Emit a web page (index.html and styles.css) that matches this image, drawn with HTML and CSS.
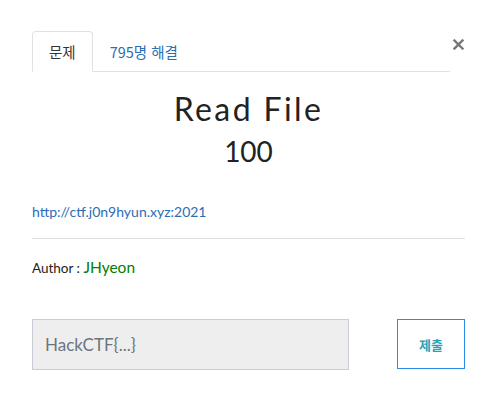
FILE: index.html
```html
<!DOCTYPE html>
<html lang="ko">
<head>
<meta charset="utf-8">
<link rel="stylesheet" href="styles.css">
</head>
<body>
<div class="modal">
  <div class="modal-head">
    <ul class="tabs">
      <li class="tab active">문제</li>
      <li class="tab">795명 해결</li>
    </ul>
    <button class="close" aria-label="닫기">
      <svg width="11" height="11" viewBox="0 0 11 11"><path d="M1.5 1.5 L9.5 9.5 M9.5 1.5 L1.5 9.5" stroke="#777" stroke-width="2.4" stroke-linecap="square"/></svg>
    </button>
  </div>
  <h1 class="title">Read File</h1>
  <div class="points">100</div>
  <p class="desc"><a href="#" class="link">http://ctf.j0n9hyun.xyz:2021</a></p>
  <hr class="sep">
  <p class="author">Author : <span class="author-name">JHyeon</span></p>
  <form class="submit-row">
    <input class="flag-input" type="text" placeholder="HackCTF{...}">
    <button class="submit-btn" type="button">제출</button>
  </form>
</div>
</body>
</html>
```
FILE: styles.css
```css
html, body {
  margin: 0;
  padding: 0;
  background: #fff;
}
body {
  font-family: Lato, "Noto Sans CJK KR", sans-serif;
  color: #212529;
}
.modal {
  padding: 31px 31px 0 32px;
  width: 433px;
}
.modal-head {
  display: flex;
  align-items: flex-start;
}
.tabs {
  flex: 1;
  display: flex;
  list-style: none;
  margin: 0;
  padding: 0;
  border-bottom: 1px solid #dee2e6;
}
.tab {
  font-family: "Noto Sans CJK KR", sans-serif;
  font-size: 14.5px;
  line-height: 23px;
  padding: 8px 16px;
  border: 1px solid transparent;
  border-top-left-radius: 4px;
  border-top-right-radius: 4px;
  margin-bottom: -1px;
  color: #2a6db5;
}
.tab.active {
  color: #333;
  border-color: #dee2e6 #dee2e6 #fff;
  background: #fff;
}
.close {
  margin: 7px 1px 0 2px;
  padding: 0;
  border: 0;
  background: none;
  width: 12px;
  height: 12px;
  display: flex;
  align-items: center;
  justify-content: center;
}
.title {
  margin: 18px 0 0;
  text-align: center;
  font-family: Lato, sans-serif;
  font-weight: 400;
  font-size: 32px;
  letter-spacing: 2.4px;
  line-height: 38px;
  color: #222;
}
.points {
  margin-top: 6px;
  text-align: center;
  font-size: 28px;
  font-weight: 400;
  line-height: 34px;
  color: #222;
}
.desc {
  margin: 34px 0 0;
  font-size: 14px;
  line-height: 20px;
}
.link {
  color: #2a6db5;
  text-decoration: none;
}
.sep {
  margin: 16px 0 0;
  border: 0;
  border-top: 1px solid #e0e0e0;
}
.author {
  margin: 18px 0 0;
  font-size: 13.5px;
  line-height: 20px;
  color: #222;
}
.author-name {
  font-size: 15.5px;
  color: #008000;
}
.submit-row {
  margin-top: 41px;
  display: flex;
  justify-content: space-between;
  align-items: flex-start;
}
.flag-input {
  box-sizing: border-box;
  width: 317px;
  height: 51px;
  margin: 0;
  padding: 0 12px;
  border: 1px solid #c9ced6;
  background: #eee;
  font-family: Lato, sans-serif;
  font-size: 17px;
  color: #333;
  outline: none;
}
.flag-input::placeholder {
  color: #6c757d;
}
.submit-btn {
  box-sizing: border-box;
  width: 68px;
  height: 50px;
  margin: 0;
  border: 1px solid #2b8af0;
  background: #fff;
  font-family: "Noto Sans CJK KR", sans-serif;
  font-weight: 700;
  font-size: 13px;
  color: #2aa3b8;
}
```
